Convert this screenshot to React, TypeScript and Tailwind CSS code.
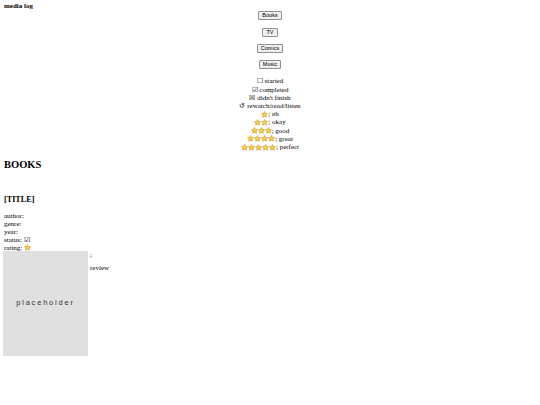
import React from "react";

function Star() {
  return (
    <svg width="7" height="7" viewBox="0 0 24 24" className="inline-block align-[-0.5px]">
      <path
        d="M12 1.8l3.1 6.6 7.1.9-5.2 4.9 1.3 7.1L12 17.8l-6.3 3.5 1.3-7.1L1.8 9.3l7.1-.9z"
        fill="#fcd34d"
        stroke="#c98a12"
        strokeWidth="2"
        strokeLinejoin="round"
      />
    </svg>
  );
}

function Stars({ n }: { n: number }) {
  return (
    <span className="inline-flex">
      {Array.from({ length: n }).map((_, i) => (
        <Star key={i} />
      ))}
    </span>
  );
}

function Btn({ label }: { label: string }) {
  return (
    <button className="h-[9px] px-[3px] bg-[#efefef] border border-[#8f8f8f] rounded-[1px] font-['Liberation_Sans',sans-serif] text-[5.5px] leading-[7px] text-black">
      {label}
    </button>
  );
}

export default function App() {
  const ratings: [number, string][] = [
    [1, "eh"],
    [2, "okay"],
    [3, "good"],
    [4, "great"],
    [5, "perfect"],
  ];
  return (
    <div className="w-[540px] h-[405px] bg-white text-black font-['Liberation_Serif',serif] text-[7px] leading-[8.2px] px-[4px] pt-[2px]">
      <div className="font-bold">media log</div>
      <div className="flex flex-col items-center gap-[7.4px] pt-[1px]">
        <Btn label="Books" />
        <Btn label="TV" />
        <Btn label="Comics" />
        <Btn label="Music" />
      </div>
      <div className="flex flex-col items-center mt-[8px]">
        <div>☐ started</div>
        <div>☑ completed</div>
        <div>☒ didn't finish</div>
        <div>↺ rewatch/read/listen</div>
        {ratings.map(([n, t]) => (
          <div key={t} className="flex items-center gap-0 h-[8.2px]">
            <Stars n={n} />
            <span>; {t}</span>
          </div>
        ))}
      </div>
      <div className="font-bold text-[10.5px] leading-[12px] mt-[8px]">BOOKS</div>
      <div className="font-bold text-[8.2px] leading-[9.5px] mt-[24px]">[TITLE]</div>
      <div className="mt-[7px]">
        <div className="h-[8px]">author:</div>
        <div className="h-[8px]">genre:</div>
        <div className="h-[8px]">year:</div>
        <div className="h-[8px]">status: ☑</div>
        <div className="h-[8px] flex items-center">
          <span>rating:&nbsp;</span>
          <Star />
        </div>
      </div>
      <div className="flex -mt-[1px] -ml-[1px]">
        <div className="w-[85px] h-[105px] bg-[#e0e0e0] flex items-center justify-center font-['Liberation_Sans',sans-serif] text-[7.5px] tracking-[1.8px] text-[#333]">
          placeholder
        </div>
        <div className="pl-[2px] pt-[0px]">
          <div>;</div>
          <div className="mt-[5px]">review</div>
        </div>
      </div>
    </div>
  );
}
